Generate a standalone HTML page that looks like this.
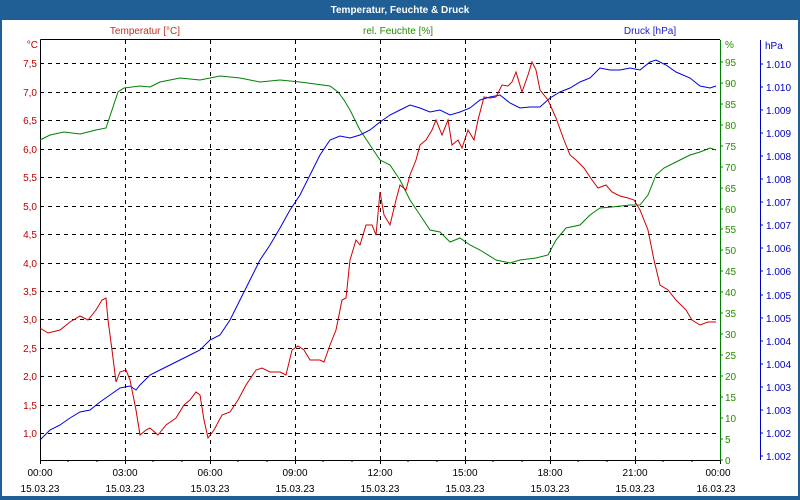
<!DOCTYPE html>
<html><head><meta charset="utf-8"><style>
html,body{margin:0;padding:0;width:800px;height:500px;overflow:hidden;background:#fff}
svg{display:block}
text{font-family:"Liberation Sans",sans-serif;font-size:10px}
</style></head><body>
<svg width="800" height="500" viewBox="0 0 800 500">
<rect x="0" y="0" width="800" height="500" fill="#1f5f96"/>
<rect x="2" y="20" width="796" height="476" fill="#fff"/>
<text x="400" y="13" text-anchor="middle" fill="#fff" font-weight="bold" style="font-size:10px">Temperatur, Feuchte &amp; Druck</text>
<text x="145" y="34" text-anchor="middle" fill="#c03020">Temperatur [°C]</text>
<text x="398" y="34" text-anchor="middle" fill="#2a8a00">rel. Feuchte [%]</text>
<text x="650" y="34" text-anchor="middle" fill="#2020c0">Druck [hPa]</text>
<g stroke="#000" stroke-dasharray="4,4" stroke-width="1">
<path d="M125.5 40V460M210.5 40V460M295.5 40V460M380.5 40V460M465.5 40V460M550.5 40V460M635.5 40V460"/>
<path d="M40 63.5H720M40 92.5H720M40 120.5H720M40 149.5H720M40 177.5H720M40 206.5H720M40 234.5H720M40 263.5H720M40 291.5H720M40 319.5H720M40 348.5H720M40 376.5H720M40 405.5H720M40 433.5H720"/>
</g>
<path d="M40.5 39.5H720M40.5 39.5V460.5H720" stroke="#000" fill="none"/>
<path d="M720.5 40V460.5" stroke="#008000" fill="none"/>
<path d="M760.5 40V460" stroke="#0000c0" fill="none"/>
<g stroke="#000">
<path d="M40.5 460v4M125.5 460v4M210.5 460v4M295.5 460v4M380.5 460v4M465.5 460v4M550.5 460v4M635.5 460v4M720.5 460v4M68 460v2M97 460v2M153 460v2M182 460v2M238 460v2M267 460v2M323 460v2M352 460v2M408 460v2M437 460v2M493 460v2M522 460v2M578 460v2M607 460v2M663 460v2M692 460v2"/>
</g>
<g fill="#c00000" text-anchor="end">
<text x="38" y="48">°C</text>
<text x="37" y="67">7,5</text><text x="37" y="96">7,0</text><text x="37" y="124">6,5</text><text x="37" y="153">6,0</text><text x="37" y="181">5,5</text><text x="37" y="210">5,0</text><text x="37" y="238">4,5</text><text x="37" y="267">4,0</text><text x="37" y="295">3,5</text><text x="37" y="323">3,0</text><text x="37" y="352">2,5</text><text x="37" y="380">2,0</text><text x="37" y="409">1,5</text><text x="37" y="437">1,0</text>
</g>
<g fill="#2a8a00">
<text x="725" y="48">%</text>
<text x="725" y="464">0</text><text x="725" y="443">5</text><text x="725" y="422">10</text><text x="725" y="401">15</text><text x="725" y="380">20</text><text x="725" y="359">25</text><text x="725" y="338">30</text><text x="725" y="317">35</text><text x="725" y="296">40</text><text x="725" y="275">45</text><text x="725" y="254">50</text><text x="725" y="233">55</text><text x="725" y="213">60</text><text x="725" y="192">65</text><text x="725" y="171">70</text><text x="725" y="150">75</text><text x="725" y="129">80</text><text x="725" y="108">85</text><text x="725" y="87">90</text><text x="725" y="66">95</text>
</g>
<g stroke="#008000"><path d="M720 460h3M720 439h3M720 418h3M720 397h3M720 376h3M720 355h3M720 334h3M720 313h3M720 292h3M720 271h3M720 250h3M720 229h3M720 209h3M720 188h3M720 167h3M720 146h3M720 125h3M720 104h3M720 83h3M720 62h3"/></g>
<g fill="#0000c0">
<text x="765" y="49">hPa</text>
<text x="766" y="68">1.010</text><text x="766" y="91">1.010</text><text x="766" y="114">1.009</text><text x="766" y="137">1.009</text><text x="766" y="160">1.008</text><text x="766" y="183">1.008</text><text x="766" y="206">1.007</text><text x="766" y="229">1.007</text><text x="766" y="252">1.006</text><text x="766" y="275">1.006</text><text x="766" y="299">1.005</text><text x="766" y="322">1.005</text><text x="766" y="345">1.004</text><text x="766" y="368">1.004</text><text x="766" y="391">1.003</text><text x="766" y="414">1.003</text><text x="766" y="437">1.002</text><text x="766" y="460">1.002</text>
</g>
<g stroke="#0000c0"><path d="M760 64h3M760 87h3M760 110h3M760 133h3M760 156h3M760 179h3M760 202h3M760 225h3M760 248h3M760 271h3M760 295h3M760 318h3M760 341h3M760 364h3M760 387h3M760 410h3M760 433h3M760 456h3"/></g>
<g fill="#000" text-anchor="middle">
<text x="40" y="476">00:00</text><text x="125" y="476">03:00</text><text x="210" y="476">06:00</text><text x="295" y="476">09:00</text><text x="380" y="476">12:00</text><text x="465" y="476">15:00</text><text x="550" y="476">18:00</text><text x="635" y="476">21:00</text><text x="718" y="476">00:00</text>
<text x="40" y="492">15.03.23</text><text x="125" y="492">15.03.23</text><text x="210" y="492">15.03.23</text><text x="295" y="492">15.03.23</text><text x="380" y="492">15.03.23</text><text x="465" y="492">15.03.23</text><text x="550" y="492">15.03.23</text><text x="635" y="492">15.03.23</text><text x="716" y="492">16.03.23</text>
</g>
<polyline fill="none" stroke="#008000" points="40,140 50,135 64,132 80,134 96,130 106,128 112,110 118,92 124,88 140,86 150,87 160,82 180,78 200,80 220,76 240,78 260,82 280,80 300,82 330,86 338,92 344,100 350,110 360,130 370,145 380,160 390,165 400,180 410,200 420,215 430,230 440,232 450,242 460,238 470,245 480,250 496,260 510,263 520,260 536,258 548,255 556,240 566,228 580,225 590,215 600,208 612,207 630,205 640,205 648,195 656,175 664,168 676,162 690,155 700,152 710,148 716,150"/>
<polyline fill="none" stroke="#0000e0" points="40,440 50,430 60,425 70,418 80,412 90,410 100,402 110,395 120,388 130,386 136,390 140,385 150,375 160,370 170,365 180,360 190,355 200,350 210,340 220,335 230,320 240,300 250,280 260,260 270,245 280,228 290,210 300,195 310,175 320,155 330,140 340,136 350,138 360,135 370,130 380,122 390,115 400,110 410,105 420,108 430,112 440,110 450,115 460,112 470,108 480,100 490,97 500,95 510,103 520,108 530,107 540,107 550,98 560,92 570,88 580,82 590,78 600,68 610,70 620,70 630,68 640,70 650,62 656,60 666,65 676,72 690,78 700,86 710,88 716,86"/>
<polyline fill="none" stroke="#d00000" points="40,328 48,333 60,330 70,322 80,316 88,320 96,310 102,300 106,298 108,320 112,350 116,382 120,372 126,370 130,380 136,410 140,435 146,430 150,428 158,435 166,425 176,418 184,405 190,400 196,392 200,395 204,420 208,438 214,430 222,415 230,412 238,400 246,385 256,370 262,368 270,372 280,372 286,375 292,350 298,346 304,350 310,360 320,360 324,362 330,345 336,330 342,300 346,298 350,260 356,240 360,245 366,225 372,225 376,235 380,192 384,215 390,225 396,200 400,185 406,190 410,175 416,160 420,145 426,140 432,130 436,120 442,135 448,120 452,145 458,140 462,148 468,130 474,140 478,120 484,97 490,98 496,97 502,85 508,86 512,82 516,72 522,92 528,75 532,62 536,70 540,90 548,100 556,118 564,140 570,155 576,160 584,168 592,180 598,188 606,185 612,192 620,196 628,198 634,200 640,210 648,230 654,260 660,285 668,290 676,300 686,310 692,320 700,325 708,322 716,322"/>
</svg>
</body></html>
